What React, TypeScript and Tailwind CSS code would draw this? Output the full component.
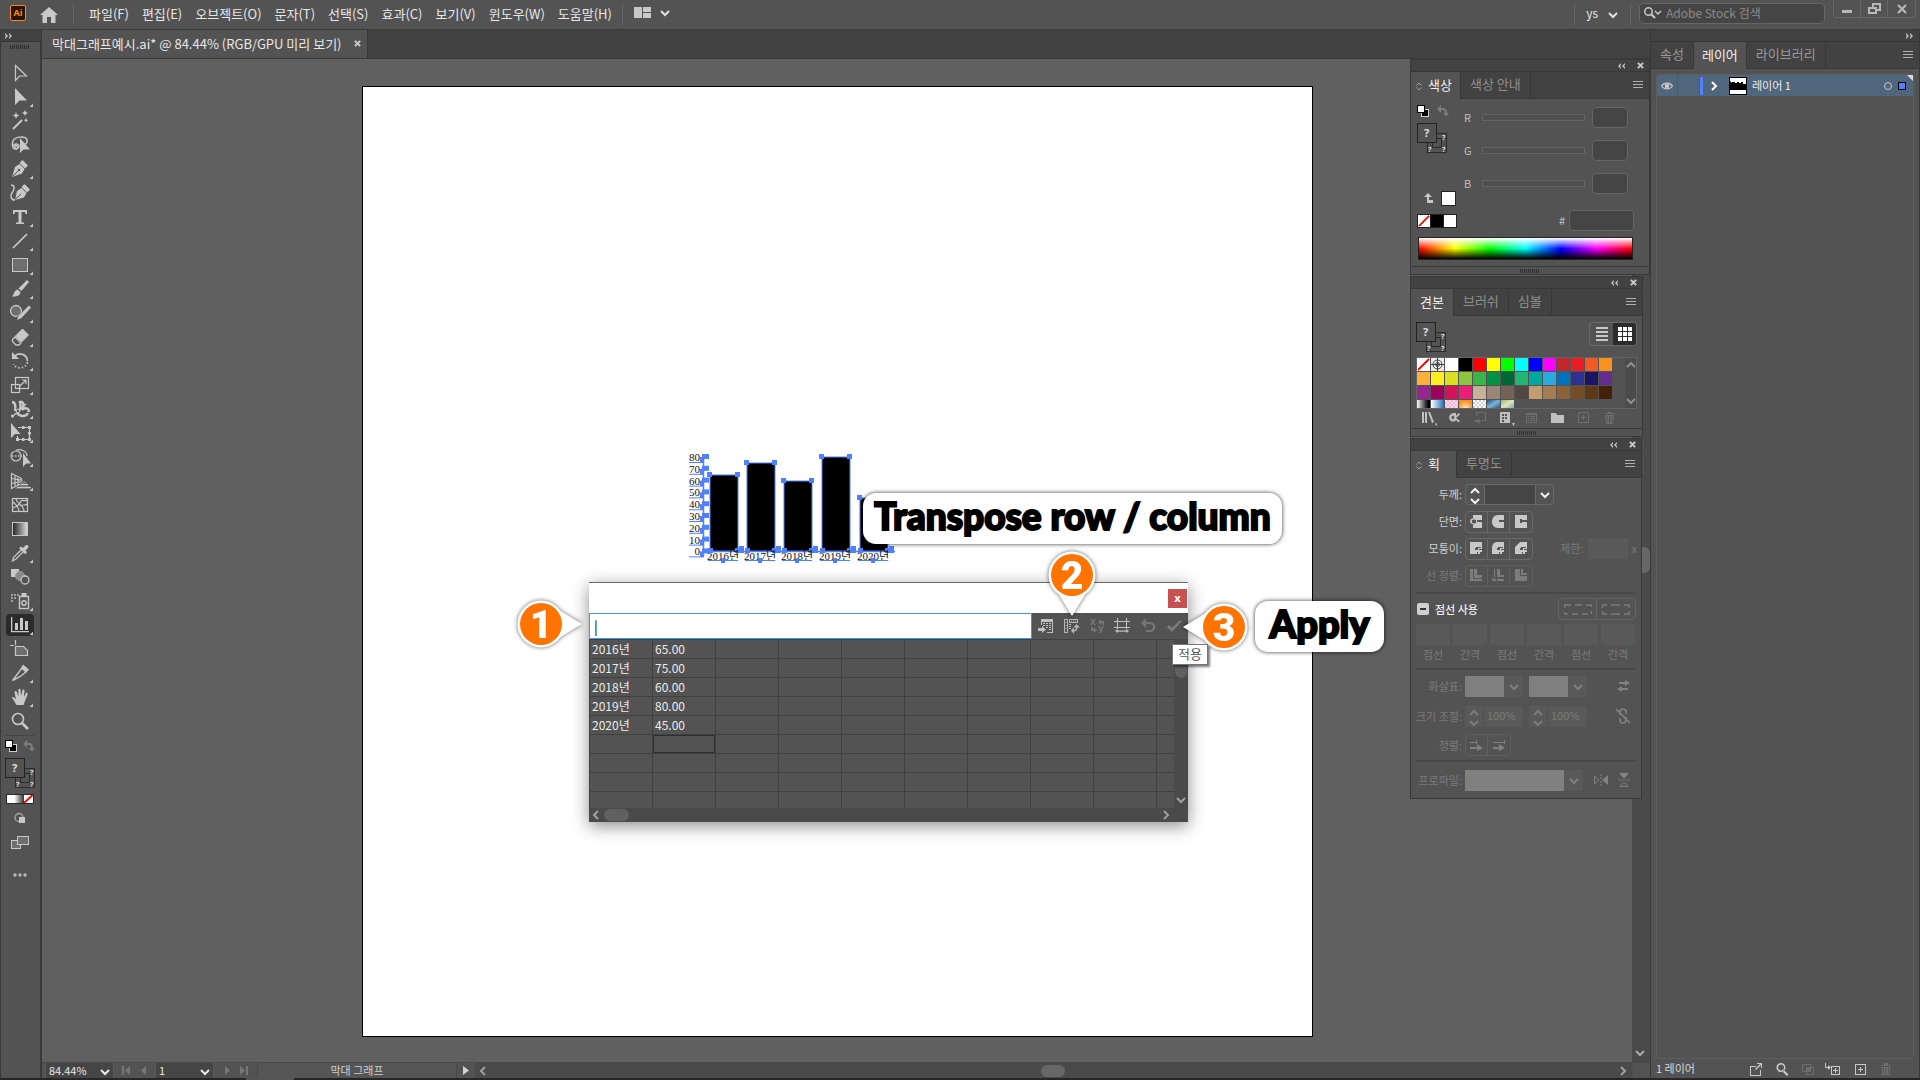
import React from "react";

const MENUS = ["파일(F)", "편집(E)", "오브젝트(O)", "문자(T)", "선택(S)", "효과(C)", "보기(V)", "윈도우(W)", "도움말(H)"];

const SWATCHES = [
  "#ffffff", "#000000", "#ff0000", "#ffff00", "#00ff00", "#00ffff", "#0000ff", "#ff00ff", "#c1272d", "#ed1c24", "#f15a24", "#f7931e",
  "#fbb03b", "#fcee21", "#d9e021", "#8cc63f", "#39b54a", "#009245", "#006837", "#22b573", "#00a99d", "#29abe2", "#0071bc", "#2e3192", "#1b1464", "#662d91",
  "#93278f", "#9e005d", "#d4145a", "#ed1e79", "#c7b299", "#998675", "#736357", "#534741", "#c69c6d", "#a67c52", "#8c6239", "#754c24", "#603813", "#42210b",
];

const DATA = [
  ["2016년", "65.00"],
  ["2017년", "75.00"],
  ["2018년", "60.00"],
  ["2019년", "80.00"],
  ["2020년", "45.00"],
];

type ChevronProps = { dir?: "down" | "up" | "left" | "right"; className?: string };

function Chevron({ dir = "down", className = "" }: ChevronProps) {
  const d = { down: "M1 3L5 7L9 3", up: "M1 7L5 3L9 7", left: "M7 1L3 5L7 9", right: "M3 1L7 5L3 9" }[dir];
  return (
    <svg viewBox="0 0 10 10" className={"h-2.5 w-2.5 shrink-0 " + className} fill="none" stroke="currentColor" strokeWidth="2">
      <path d={d} />
    </svg>
  );
}

function DoubleArrow({ left = false }: { left?: boolean }) {
  return (
    <svg viewBox="0 0 8 6" className="h-1.5 w-2" fill="#c8c8c8">
      {left ? <path d="M4 0L1 3L4 6V4.500L3 3L4 1.500ZM8 0L5 3L8 6V4.500L7 3L8 1.500Z" /> : <path d="M0 0L3 3L0 6V4.500L1 3L0 1.500ZM4 0L7 3L4 6V4.500L5 3L4 1.500Z" />}
    </svg>
  );
}

function Cross() {
  return (
    <svg viewBox="0 0 8 8" className="h-[7px] w-[7px]" stroke="#c8c8c8" strokeWidth="2.4">
      <path d="M1 1L7 7M7 1L1 7" />
    </svg>
  );
}

function MenuLines() {
  return (
    <svg viewBox="0 0 10 8" className="h-2 w-2.5" stroke="#b0b0b0" strokeWidth="1">
      <path d="M0 .5H10M0 3.500H10M0 6.500H10" />
    </svg>
  );
}

function Grip() {
  return (
    <svg viewBox="0 0 20 4" className="h-1 w-5" stroke="#2f2f2f" strokeWidth="1">
      <path d="M.5 0V4M2.500 0V4M4.500 0V4M6.500 0V4M8.500 0V4M10.500 0V4M12.500 0V4M14.500 0V4M16.500 0V4M18.500 0V4" />
    </svg>
  );
}

const L = "#c8c8c8";

const TOOLS: { name: string; more?: boolean; active?: boolean; icon: React.ReactNode }[] = [
  { name: "선택", icon: <path d="M12.500 4.500V19.500L16.500 15H23.500Z" fill="none" stroke={L} strokeWidth="1.200" /> },
  { name: "직접 선택", more: true, icon: <path d="M12 3V20L16.500 15.500H24Z" fill={L} /> },
  {
    name: "자동 선택",
    icon: (
      <g fill={L}>
        <path d="M10 20L19 11" stroke={L} strokeWidth="2" />
        <path d="M13 3L14 5.500L16.500 6.500L14 7.500L13 10L12 7.500L9.500 6.500L12 5.500ZM22 1L23 3L25 4L23 5L22 7L21 5L19 4L21 3ZM23 9L23.700 10.500L25 11.200L23.700 12L23 13.500L22.300 12L21 11.200L22.300 10.500Z" />
      </g>
    ),
  },
  {
    name: "올가미",
    icon: (
      <g>
        <path d="M14 16C10 17 8 13 10 8C12 3 23 3 24 7C24.500 9 23 11 21 12M10 13C13 9 18 12 15 15C13 17 11 15 12 13.500C13 12 15 13 14 14.500" fill="none" stroke={L} strokeWidth="1.500" />
        <path d="M17 5V20L20.500 16.500H27Z" fill={L} />
      </g>
    ),
  },
  {
    name: "펜",
    more: true,
    icon: (
      <g>
        <path d="M19.500 4L24 8.500L22 10.500L17.500 6Z" fill={L} stroke={L} strokeWidth="1.500" strokeLinejoin="round" />
        <path d="M16.500 7L21.500 12L19 16.500L9 20L12 10Z" fill={L} />
        <path d="M9.500 19.500L15.500 13.500" stroke="#535353" />
        <circle cx="16" cy="13" r="1.200" fill="#535353" />
      </g>
    ),
  },
  {
    name: "곡률",
    icon: (
      <g>
        <path d="M21.500 4L26 8.500L24 10.500L19.500 6Z" fill={L} stroke={L} strokeWidth="1.500" strokeLinejoin="round" />
        <path d="M18.500 7L23.500 12L21 16.500L12 19L14 10Z" fill={L} />
        <path d="M12 18.500L18 13" stroke="#535353" />
        <path d="M8 4C12 4 12 8 9 12C7 15 8 19 12 19" fill="none" stroke={L} strokeWidth="1.500" />
      </g>
    ),
  },
  { name: "문자", more: true, icon: <path d="M10 5H24V9H22.500L22 7H18.500V17.500H21V19H13V17.500H15.500V7H12L11.500 9H10Z" fill={L} /> },
  { name: "선분", more: true, icon: <path d="M10 19L24 5" stroke={L} strokeWidth="1.700" /> },
  { name: "사각형", more: true, icon: <rect x="9.500" y="5.500" width="15" height="13" fill="#6e6e6e" stroke={L} /> },
  {
    name: "페인트브러시",
    more: true,
    icon: (
      <g fill={L}>
        <path d="M24 3L26 5L18.500 14L15.500 11.500Z" />
        <path d="M14.500 12.500L17.500 15C17 19 13 20 9 19.500C11 18 11 13.500 14.500 12.500Z" />
      </g>
    ),
  },
  {
    name: "물방울 브러쉬",
    more: true,
    icon: (
      <g>
        <circle cx="13" cy="10" r="5.500" fill="#6e6e6e" stroke={L} strokeWidth="1.300" />
        <path d="M27 5L18 16L14 19" stroke="#535353" strokeWidth="5" fill="none" />
        <path d="M26 4.500L28 6.500L18.500 17L14 19L15.500 15Z" fill={L} />
      </g>
    ),
  },
  {
    name: "지우개",
    more: true,
    icon: (
      <g>
        <path d="M19.500 4L25.500 10L18.500 17L12.500 11Z" fill={L} stroke={L} strokeWidth="1" strokeLinejoin="round" />
        <path d="M12 12L18 18L16 20H13L9.500 16.500V14.500Z" fill="none" stroke={L} strokeWidth="1.300" />
      </g>
    ),
  },
  {
    name: "회전",
    more: true,
    icon: (
      <g fill="none" stroke={L} strokeWidth="1.700">
        <path d="M12 7C16 3 24 5 24.500 12" />
        <path d="M24.500 13C23 20 13 21 10.500 15" strokeDasharray="1.500 2" />
        <path d="M9 3V10H16Z" fill={L} stroke="none" />
      </g>
    ),
  },
  {
    name: "크기 조절",
    more: true,
    icon: (
      <g fill="none" stroke={L} strokeWidth="1.200">
        <rect x="12.500" y="4.500" width="13" height="11" />
        <rect x="8.500" y="11.500" width="8" height="8" />
        <path d="M17 13L22.500 7.500M19 7H23V11" />
      </g>
    ),
  },
  {
    name: "폭",
    more: true,
    icon: (
      <g fill="none" stroke={L}>
        <path d="M9 5C12 5 13 9 12 14M14 13C18 15 18 9 17 5C20 4 22 8 19 12M19 13C22 10 26 11 26 15M14 16C17 20 23 20 25 16" strokeWidth="2.400" />
        <path d="M9 20L23 7" strokeWidth="1.200" />
        <circle cx="15" cy="14" r="1.800" fill="#535353" />
        <circle cx="9.500" cy="19" r="1.500" fill={L} stroke="none" />
      </g>
    ),
  },
  {
    name: "자유 변형",
    more: true,
    icon: (
      <g>
        <path d="M15 6.500H26.500V18.500H14.500V15" fill="none" stroke={L} strokeWidth="1.200" />
        <path d="M25 5H28V8H25ZM25 17H28V20H25ZM13 17H16V20H13ZM19 5H21.500V8H19ZM19 17H21.500V20H19ZM25 11H28V13.500H25Z" fill={L} />
        <path d="M8 2V17L12 13H17.500Z" fill={L} />
      </g>
    ),
  },
  {
    name: "도형 구성",
    more: true,
    icon: (
      <g>
        <circle cx="13" cy="11" r="5" fill="none" stroke={L} strokeWidth="1.200" />
        <path d="M13 5.500C17 3 24 6 24 11" fill="none" stroke={L} strokeWidth="1.200" />
        <path d="M9 11H19" stroke={L} strokeDasharray="1.500 1.500" strokeWidth="1.300" />
        <path d="M20 8V22L23 18.500H28Z" fill={L} />
      </g>
    ),
  },
  {
    name: "원근감 격자",
    more: true,
    icon: (
      <g>
        <path d="M8.500 4.500V19.500L18.500 14.500V9.500ZM8.500 9.500L18.500 11M8.500 14.500L18.500 12.500M12 6V18M15 7.500V16" fill="none" stroke={L} strokeWidth="1.200" />
        <path d="M18 12H22L28 20H12L18 15Z" fill="#7a7a7a" />
        <path d="M18 15.500H25M14 18.500H28" stroke={L} />
      </g>
    ),
  },
  {
    name: "망",
    icon: (
      <g fill="none" stroke={L} strokeWidth="1.200">
        <rect x="9.500" y="5.500" width="15" height="13" />
        <path d="M10 9C13 12 15 12 16 18M13 6C13 10 20 11 21 18M10 15C13 13 16 14 18 8C19 6 22 9 24 7M17 13C20 11 22 13 24 11" />
      </g>
    ),
  },
  { name: "그라디언트", icon: <rect x="9.500" y="5.500" width="15" height="13" fill="url(#toolGradient)" stroke={L} /> },
  {
    name: "스포이드",
    more: true,
    icon: (
      <g>
        <path d="M18.500 8.500L20.500 10.500L13 18L9.500 20L10.500 16.500Z" fill="none" stroke={L} strokeWidth="1.300" />
        <path d="M16 7L18 5.500L20 7L22.500 4.500C24.500 3 26.500 5.500 25 7L22.500 9.500L24 11.500L22 13Z" fill={L} />
      </g>
    ),
  },
  {
    name: "블렌드",
    icon: (
      <g>
        <rect x="8" y="4" width="8" height="8" fill={L} />
        <circle cx="17" cy="11" r="4.500" fill="#8a8a8a" stroke="#9c9c9c" />
        <circle cx="22" cy="15" r="4" fill="#535353" stroke={L} strokeWidth="1.300" />
      </g>
    ),
  },
  {
    name: "심볼 분무기",
    more: true,
    icon: (
      <g>
        <rect x="16.500" y="7.500" width="9" height="12" fill="none" stroke={L} strokeWidth="1.400" />
        <rect x="18.500" y="4" width="5" height="3" fill={L} />
        <circle cx="21" cy="14" r="2.200" fill="none" stroke={L} strokeWidth="1.400" />
        <path d="M8 5H10V7H8ZM11 5H13V7H11ZM14 5H16V7H14ZM8 8H10V10H8ZM11 8H13V10H11ZM8 11H10V13H8Z" fill="#a0a0a0" />
      </g>
    ),
  },
  { name: "막대 그래프", more: true, active: true, icon: <path d="M8 4H9.300V18H26V19.300H8ZM12 10H15V17H12ZM17 5H20V17H17ZM22 8H25V17H22Z" fill={L} /> },
  {
    name: "대지",
    icon: (
      <g fill="none" stroke={L} strokeWidth="1.200">
        <path d="M12.500 9.500H20.500L24.500 13.500V18.500H12.500Z" fill="#6e6e6e" />
        <path d="M12.500 3V8M7 8.500H11" />
      </g>
    ),
  },
  {
    name: "분할 영역",
    more: true,
    icon: (
      <g>
        <path d="M19 7L23 11L16.500 16L9.500 19.500Z" fill="none" stroke={L} strokeWidth="1.400" />
        <path d="M20 3.500L26 8.500L23.500 11.500L18 7Z" fill={L} />
      </g>
    ),
  },
  {
    name: "손",
    more: true,
    icon: (
      <path d="M13.500 20C12 17 10 15 9 12.500C9.500 11.500 11 12 13 14.500L11.500 7C12 5.500 13.500 6 14 7.500L15.500 11.500L15.300 4.500C15.800 3.500 17.200 3.500 17.500 4.500L18 11L19.500 5C20 4 21.500 4.500 21.500 5.500L20.800 12L23 8C24 7 25 8 24.500 9.500L22 16L20.500 20Z" fill={L} />
    ),
  },
  {
    name: "돋보기",
    icon: (
      <g fill="none" stroke={L}>
        <circle cx="15" cy="10" r="5.500" strokeWidth="1.600" />
        <path d="M19 14L25 20" strokeWidth="2.600" />
      </g>
    ),
  },
];

function FillStroke() {
  return (
    <svg viewBox="0 0 31 31" className="block h-[31px] w-[31px]" fontFamily="Noto Sans, sans-serif" fontWeight="700" fill="#e0e0e0">
      <rect x="10.500" y="10.500" width="19" height="19" fill="#535353" stroke="#2a2a2a" />
      <rect x="15.500" y="15.500" width="9" height="9" fill="#535353" stroke="#2a2a2a" />
      <text x="25" y="17" fontSize="7">?</text>
      <text x="25" y="29" fontSize="7">?</text>
      <text x="11" y="29" fontSize="7">?</text>
      <rect x=".5" y=".5" width="19" height="19" fill="#535353" stroke="#222222" />
      <text x="7" y="14" fontSize="11">?</text>
    </svg>
  );
}

function DefaultColors() {
  return (
    <svg viewBox="0 0 12 12" className="h-3 w-3">
      <rect x="4" y="4" width="8" height="8" fill="#d0d0d0" />
      <rect x="5" y="5" width="6" height="6" fill="#000" />
      <rect x="0" y="0" width="8" height="8" fill="#d0d0d0" />
      <rect x=".5" y=".5" width="7" height="7" fill="#fff" stroke="#000" />
    </svg>
  );
}

function SwapArrow() {
  return (
    <svg viewBox="0 0 12 12" className="h-3 w-3" fill="#7d7d7d">
      <path d="M0 4L4 0V3H6C9 3 10 5 10 8H12L9 11.500L6 8H8C8 6 7.500 5 6 5H4V8Z" />
    </svg>
  );
}

function Toolbar() {
  return (
    <aside className="flex w-[42px] shrink-0 flex-col border-x border-[#3a3a3a] bg-[#535353]">
      <svg className="absolute h-0 w-0">
        <defs>
          <linearGradient id="toolGradient">
            <stop offset="0" stopColor="#222" />
            <stop offset="1" stopColor="#ddd" />
          </linearGradient>
        </defs>
      </svg>
      <div className="flex h-3 shrink-0 items-center border-b border-[#353535] bg-[#424242] pl-1">
        <DoubleArrow />
      </div>
      <div className="flex w-full flex-1 flex-col items-center border-r border-[#3a3a3a] pr-0.5">
        <div className="pt-[3px] pb-3">
          <Grip />
        </div>
        {TOOLS.map((t) => (
          <button key={t.name} aria-label={t.name} className={"block h-6 w-[34px] " + (t.active ? "px-[3px]" : "")}>
            <span className={"flex justify-center overflow-visible " + (t.active ? "h-[22px] items-center rounded-sm bg-[#2b2b2b]" : "h-6")}>
              <svg viewBox="0 0 34 24" className="h-6 w-[34px] shrink-0">
                {t.icon}
                {t.more && <path d="M30 18.500V22H26.500Z" fill={L} />}
              </svg>
            </span>
          </button>
        ))}
        <div className="mt-[2px] h-px w-[30px] bg-[#454545]" />
        <div className="mt-1 flex w-[30px] items-center justify-between">
          <DefaultColors />
          <SwapArrow />
        </div>
        <div className="mt-[6px] w-[30px]">
          <FillStroke />
        </div>
        <div className="mt-[5px] grid h-[10px] w-7 grid-cols-3 border border-[#2a2a2a] bg-[#2a2a2a]">
          <div className="bg-white" />
          <div className="bg-linear-to-r from-[#eee] to-[#333]" />
          <svg viewBox="0 0 9 8" className="h-2 w-full bg-white" preserveAspectRatio="none">
            <path d="M0 8L9 0" stroke="red" strokeWidth="2" />
          </svg>
        </div>
        <button aria-label="그리기 모드" className="mt-2">
          <svg viewBox="0 0 34 14" className="block h-3.5 w-[34px]">
            <circle cx="16" cy="5.500" r="4" fill="none" stroke="#a8a8a8" strokeWidth="1.300" />
            <rect x="16" y="5" width="6" height="6" fill={L} />
          </svg>
        </button>
        <button aria-label="화면 모드" className="mt-2.5">
          <svg viewBox="0 0 34 14" className="block h-3.5 w-[34px]" fill="#6e6e6e" stroke={L}>
            <rect x="8.500" y="4.500" width="9" height="8" />
            <rect x="14.500" y=".5" width="11" height="8" />
          </svg>
        </button>
        <button aria-label="도구 모음 편집" className="mt-5">
          <svg viewBox="0 0 14 10" className="block h-2.5 w-3.5" fill="#b8b8b8">
            <circle cx="2" cy="5" r="1.700" />
            <circle cx="7" cy="5" r="1.700" />
            <circle cx="12" cy="5" r="1.700" />
          </svg>
        </button>
      </div>
    </aside>
  );
}

function TopBar() {
  return (
    <header className="flex h-[30px] shrink-0 items-center border-b border-[#3a3a3a] bg-[#535353] pl-2.5 text-[13px] leading-none text-[#e8e8e8]">
      <div className="mb-1 flex h-4 w-4 items-center justify-center rounded-xs border border-[#ff8a1a] bg-[#2a1400] font-['Open_Sans'] text-[9px] font-bold text-[#ff8a1a]">Ai</div>
      <button aria-label="홈" className="ml-3.5">
        <svg viewBox="0 0 18 16" className="h-4 w-[18px]" fill="#c8c8c8">
          <path d="M9 0L18 8H15.500V16H11V10H7V16H2.500V8H0Z" />
        </svg>
      </button>
      <div className="mx-[15px] h-5 w-px bg-[#666666]" />
      <nav className="flex gap-[13px] pb-0.5 whitespace-nowrap">
        {MENUS.map((m) => (
          <button key={m}>{m}</button>
        ))}
      </nav>
      <div className="ml-2.5 mr-[11px] h-5 w-px bg-[#666666]" />
      <button aria-label="작업 영역 정돈" className="flex items-center gap-2 pb-1">
        <svg viewBox="0 0 18 12" className="h-3 w-[18px]" fill="#c8c8c8">
          <path d="M0 0H8V11H0ZM9 0H17V5H9ZM9 6H17V11H9Z" />
        </svg>
        <Chevron className="text-[#e0e0e0]" />
      </button>
      <div className="ml-auto mr-[11px] h-5 w-px bg-[#666666]" />
      <button className="flex items-center gap-2.5 pb-1 text-xs">
        ys <Chevron className="mt-1 h-2 w-2 text-[#e0e0e0]" />
      </button>
      <div className="ml-3 mr-2 h-5 w-px bg-[#666666]" />
      <label className="mb-0.5 flex h-[21px] w-[186px] items-center gap-1 rounded border border-[#666666] bg-[#454545] px-1 pb-0.5">
        <svg viewBox="0 0 18 12" className="h-3 w-[18px] shrink-0" fill="none" stroke="#c8c8c8">
          <circle cx="4.500" cy="4.500" r="3.700" strokeWidth="1.500" />
          <path d="M7 7L11 11" strokeWidth="2.200" />
          <path d="M11 4L14 7L17 4" strokeWidth="1.500" />
        </svg>
        <input aria-label="Adobe Stock 검색" placeholder="Adobe Stock 검색" className="w-full bg-transparent text-xs outline-none placeholder:text-[#8a8a8a]" />
      </label>
      <div className="mr-1 ml-2 flex self-start rounded-b border border-t-0 border-[#666666]">
        <button aria-label="최소화" className="flex h-[17px] w-[27px] items-end justify-center border-r border-[#666666] pb-1">
          <span className="h-[3px] w-2.5 bg-[#b8b8b8]" />
        </button>
        <button aria-label="복원" className="flex h-[17px] w-[27px] items-center justify-center border-r border-[#666666]">
          <svg viewBox="0 0 13 11" className="h-[11px] w-[13px]" fill="none" stroke="#b8b8b8" strokeWidth="2">
            <path d="M5 4V1H12V7H8M1 5H8V10H1Z" />
          </svg>
        </button>
        <button aria-label="닫기" className="flex h-[17px] w-[27px] items-center justify-center">
          <svg viewBox="0 0 10 10" className="h-2.5 w-2.5" stroke="#b8b8b8" strokeWidth="2.200">
            <path d="M1 1L9 9M9 1L1 9" />
          </svg>
        </button>
      </div>
    </header>
  );
}

type TabsProps = { tabs: string[]; stepper?: boolean; firstPad: string; pad: string };

function PanelTabs({ tabs, stepper, firstPad, pad }: TabsProps) {
  return (
    <div role="tablist" className="flex h-[27px] border-b border-[#383838] bg-[#424242] text-[13px] leading-none text-[#8f8f8f]">
      {tabs.map((t, i) => (
        <button
          key={t}
          role="tab"
          aria-selected={i === 0}
          className={"-mb-px flex items-center gap-1.5 border-r border-[#383838] pb-[3px] " + (i === 0 ? "bg-[#535353] text-[#efefef] " + firstPad : "border-b " + pad)}
        >
          {stepper && i === 0 && (
            <svg viewBox="0 0 6 9" className="mt-1 h-[9px] w-1.5" fill="none" stroke="#a0a0a0">
              <path d="M.5 3.500L3 1L5.500 3.500M.5 5.500L3 8L5.500 5.500" />
            </svg>
          )}
          {t}
        </button>
      ))}
      <button aria-label="패널 메뉴" className="ml-auto pr-1.5">
        <MenuLines />
      </button>
    </div>
  );
}

function PanelHeader() {
  return (
    <div className="flex h-3 items-center justify-end gap-3 border-b border-[#383838] bg-[#424242] pr-[5px]">
      <button aria-label="축소">
        <DoubleArrow left />
      </button>
      <button aria-label="패널 닫기">
        <Cross />
      </button>
    </div>
  );
}

function PanelGrip() {
  return (
    <div className="flex h-2 items-center justify-center border-t border-[#383838]">
      <Grip />
    </div>
  );
}

function None({ className }: { className: string }) {
  return (
    <svg viewBox="0 0 13 13" className={className}>
      <rect width="13" height="13" fill="#fff" />
      <path d="M1 12L12 1" stroke="red" strokeWidth="1.800" />
    </svg>
  );
}

function ColorPanel() {
  return (
    <section className="w-60 border border-[#383838] bg-[#535353]">
      <PanelHeader />
      <PanelTabs tabs={["색상", "색상 안내"]} stepper firstPad="pr-2 pl-[5px]" pad="px-[9px]" />
      <div className="flex h-[167px] flex-col px-1.5 pt-1.5">
        <div className="flex">
          <div className="w-[47px]">
            <div className="flex w-8 justify-between">
              <DefaultColors />
              <SwapArrow />
            </div>
            <div className="mt-1.5">
              <FillStroke />
            </div>
            <div className="mt-9 flex h-4 items-center gap-2 pl-[7px]">
              <svg viewBox="0 0 9 10" className="h-2.5 w-[9px]" fill="#c8c8c8">
                <path d="M4 0L8 4H5V7H9V10H3V4H0Z" />
              </svg>
              <div className="h-[15px] w-[15px] border border-[#222222] bg-white" />
            </div>
          </div>
          <div className="flex-1 pt-0.5 text-[11px] leading-none text-[#c0c0c0]">
            {["R", "G", "B"].map((c) => (
              <label key={c} className="mb-3 flex h-[21px] items-center">
                <span className="w-[18px]">{c}</span>
                <input type="range" aria-label={c + " 슬라이더"} className="h-[7px] w-[103px] appearance-none border border-[#646464] bg-[#4f4f4f] [&::-webkit-slider-thumb]:w-0 [&::-webkit-slider-thumb]:appearance-none" />
                <input aria-label={c + " 값"} className="ml-[7px] h-[21px] w-9 rounded-sm border border-[#666666] bg-[#454545]" />
              </label>
            ))}
          </div>
        </div>
        <div className="mt-1 flex items-center">
          <div className="flex gap-px border border-[#222222] bg-[#222222]">
            <None className="h-3 w-3" />
            <div className="h-3 w-3 bg-black" />
            <div className="h-3 w-3 bg-white" />
          </div>
          <label className="mr-[9px] ml-auto flex items-center gap-1 text-[11px] leading-none text-[#c0c0c0]">
            #
            <input className="h-[21px] w-[65px] rounded-sm border border-[#666666] bg-[#454545]" />
          </label>
        </div>
        <div className="mt-1.5 ml-px h-[23px] w-[215px] border border-[#222222] bg-[linear-gradient(to_bottom,#fff,#fff0_50%,#0000_50%,#000),linear-gradient(to_right,red,#ff0,lime,cyan,blue,magenta,red)]" />
      </div>
      <PanelGrip />
    </section>
  );
}

const SWATCH_ACTIONS = [
  { name: "견본 라이브러리", on: true, d: "M2 3H4V14H2ZM5 3H7V14H5ZM8 3H10L14 13L12 14ZM14.500 14.500H17V17Z" },
  { name: "색상 테마", on: true, d: "M8 4C4 4 2 8 4 11C5 13 9 13 10 11L12.500 13.500L14 12L10 9L14 5.500L12.500 4L10 7V4ZM7.500 6.500L8.500 8.500L7 10.500C5 10 5 7 7.500 6.500Z" },
  { name: "추가", d: "M4 3H14V12H10V11H13V4H5V7H4ZM2 11H6V9L9 12L6 15V13H2Z" },
  { name: "견본 종류", on: true, d: "M2 3H12V14H2ZM4 5V7H6V5ZM7 5V7H9V5ZM4 8V10H6V8ZM7 8V10H9V8ZM4 11V13H6V11ZM14 14H17L15.500 17Z" },
  { name: "견본 옵션", d: "M3 4H14V14H3ZM4 6V13H13V6ZM5 7H6V8H5ZM7 7H12V8H7ZM5 9H6V10H5ZM7 9H12V10H7ZM5 11H6V12H5ZM7 11H12V12H7Z" },
  { name: "새 색상 그룹", on: true, d: "M2 4H7L8 6H15V14H2Z" },
  { name: "새 견본", d: "M3 3H14V14H3ZM4 4V13H13V4ZM8 6H9V8H11V9H9V11H8V9H6V8H8Z" },
  { name: "견본 삭제", d: "M3 4H7V3H10V4H14V5H3ZM4 6H13L12 15H5ZM5.500 7V14H6.500V7ZM8 7V14H9V7ZM10.500 7V14H11.500V7Z" },
];

function SwatchesPanel() {
  return (
    <section className="w-[233px] border border-[#383838] bg-[#535353]">
      <PanelHeader />
      <PanelTabs tabs={["견본", "브러쉬", "심볼"]} firstPad="px-[9px]" pad="px-[9px]" />
      <div className="flex h-[112px] flex-col px-[5px] pt-1.5">
        <div className="flex justify-between">
          <FillStroke />
          <div className="flex h-6 w-12 overflow-hidden rounded-sm border border-[#6a6a6a]">
            <button aria-label="목록 보기" className="flex flex-1 items-center justify-center">
              <svg viewBox="0 0 12 14" className="h-3.5 w-3" fill="#c8c8c8">
                <path d="M0 0H12V2H0ZM0 4H12V6H0ZM0 8H12V10H0ZM0 12H12V14H0Z" />
              </svg>
            </button>
            <button aria-label="축소판 보기" className="flex flex-1 items-center justify-center bg-[#2b2b2b]">
              <svg viewBox="0 0 14 14" className="h-3.5 w-3.5" fill="#fff">
                <path d="M0 0H4V4H0ZM5 0H9V4H5ZM10 0H14V4H10ZM0 5H4V9H0ZM5 5H9V9H5ZM10 5H14V9H10ZM0 10H4V14H0ZM5 10H9V14H5ZM10 10H14V14H10Z" />
              </svg>
            </button>
          </div>
        </div>
        <div className="mt-1 flex h-[52px] border border-[#646464] bg-[#4b4b4b]">
          <div className="grid w-[208px] grid-cols-[repeat(14,13px)] grid-rows-[13px_13px_13px_8px] gap-px overflow-hidden bg-[#535353]">
            <None className="h-[13px] w-[13px]" />
            <svg viewBox="0 0 13 13" className="h-[13px] w-[13px] bg-[#ececec]" fill="none" stroke="#444">
              <circle cx="6.500" cy="6.500" r="4.500" />
              <circle cx="6.500" cy="6.500" r="2" />
              <path d="M6.500 0V13M0 6.500H13" />
            </svg>
            {SWATCHES.map((c) => (
              <div key={c} style={{ backgroundColor: c }} />
            ))}
            <div className="bg-linear-to-r from-white to-black" />
            <div className="bg-linear-to-r from-white to-[#0071bc]" />
            <div className="bg-[repeating-conic-gradient(#f3b6d2_0_25%,#fbdbe9_0_50%)] bg-size-[4px_4px]" />
            <div className="bg-[radial-gradient(circle_at_50%_100%,#ffe9c8,#f7931e_70%)]" />
            <div className="bg-[repeating-conic-gradient(#ccc_0_25%,#fff_0_50%)] bg-size-[4px_4px]" />
            <div className="bg-linear-to-br from-[#1d4f83] via-[#7fb2d8] to-[#1f5f94]" />
            <div className="bg-linear-to-br from-[#7dbd8c] via-[#e9e4b0] to-[#6fb0c4]" />
          </div>
          <div className="flex flex-1 flex-col items-center justify-between bg-[#4b4b4b] py-0.5 text-[#909090]">
            <Chevron dir="up" className="h-2 w-2" />
            <Chevron className="h-2 w-2" />
          </div>
        </div>
        <div className="flex w-[203px] justify-between pl-1">
          {SWATCH_ACTIONS.map((a) => (
            <button key={a.name} aria-label={a.name}>
              <svg viewBox="0 0 18 18" className="h-[18px] w-[18px]" fill={a.on ? "#c0c0c0" : "#6e6e6e"} fillRule="evenodd">
                <path d={a.d} />
              </svg>
            </button>
          ))}
        </div>
      </div>
      <PanelGrip />
    </section>
  );
}

function Row({ label, dim, height = "h-[27px]", children }: { label: string; dim?: boolean; height?: string; children: React.ReactNode }) {
  return (
    <div className={"flex items-center " + height}>
      <span className={"mr-[3px] w-[49px] shrink-0 text-right whitespace-nowrap " + (dim ? "text-[#7a7a7a]" : "text-[#d0d0d0]")}>{label}</span>
      {children}
    </div>
  );
}

function IconGroup({ label, icons, color, dim }: { label: string; icons: string[]; color: string; dim?: boolean }) {
  return (
    <div role="group" aria-label={label} className={"flex h-[22px] divide-x rounded-sm border " + (dim ? "divide-[#606060] border-[#606060]" : "divide-[#696969] border-[#696969]")}>
      {icons.map((d, i) => (
        <button key={i} aria-label={label + (i + 1)} className="flex w-[22px] items-center justify-center">
          <svg viewBox="0 0 13 13" className="h-[13px] w-[13px]" fill={color} fillRule="evenodd">
            <path d={d} />
          </svg>
        </button>
      ))}
    </div>
  );
}

function DimSelect({ label, width }: { label: string; width: string }) {
  return (
    <label className={"relative mr-1.5 flex h-[21px] bg-[#595959] " + width}>
      <select aria-label={label} className="mr-[19px] w-full appearance-none bg-[#808080]" disabled />
      <Chevron className="absolute top-1.5 right-1 h-2.5 w-2.5 text-[#808080]" />
    </label>
  );
}

function ScaleBox({ label }: { label: string }) {
  return (
    <label className="mr-1.5 flex h-[21px] w-[58px] items-center bg-[#595959] text-[#7c7c7c]">
      <span className="flex h-full w-[19px] flex-col items-center justify-between border-r border-[#505050] py-0.5">
        <Chevron dir="up" className="h-2 w-2" />
        <Chevron className="h-2 w-2" />
      </span>
      <input aria-label={label} defaultValue="100%" disabled className="w-9 bg-transparent pb-0.5 pl-[3px] text-[11px]" />
    </label>
  );
}

function Rule() {
  return <div className="mr-[5px] ml-[3px] h-0.5 bg-[#494949]" />;
}

const CAP_ICONS = [
  "M3 0H12V5H7V7H12V13H3V9L6 8V5L3 4ZM0 6C0 4 2 3 4 4V5C1 4 1 9 4 8V9C2 10 0 8 0 6Z",
  "M6 0H12V5H7V7H12V13H6C-2 13-2 0 6 0Z",
  "M0 0H12V5H7V4H5V8H7V7H12V13H0Z",
];
const JOIN_ICONS = [
  "M0 0H12V7H9V10H7V12H0ZM6 5H11V6H8V8H5V6H6ZM9 8H12V10H10V12H8V10H9Z",
  "M6 0H12V7H9V10H7V12H0V6C0 2 2 0 6 0ZM6 5H11V6H8V8H5V6H6ZM9 8H12V10H10V12H8V10H9Z",
  "M5 0H12V7H9V10H7V12H0V5ZM6 5H11V6H8V8H5V6H6ZM9 8H12V10H10V12H8V10H9Z",
];
const ALIGN_ICONS = ["M0 0H3V12H0ZM4 0H7V6H12V9H4ZM3 10H12V12H3Z", "M2 0H3V9H1V10H12V12H5V10H4V12H1L0 11V9H2ZM5 0H8V6H12V8H5Z", "M0 0H5V7H12V12H0ZM6 0H8V4H12V6H6Z"];

function StrokePanel() {
  return (
    <section className="w-[232px] border border-[#383838] bg-[#535353] text-[11px] leading-none">
      <PanelHeader />
      <PanelTabs tabs={["획", "투명도"]} stepper firstPad="pr-4 pl-[5px]" pad="px-[9px]" />
      <div className="pt-[3px] pl-0.5">
        <Row label="두께:">
          <div className="flex h-[21px] rounded-sm border border-[#696969] text-[#efefef]">
            <button aria-label="두께 조정" className="flex w-[18px] flex-col items-center justify-between py-px">
              <Chevron dir="up" className="h-2 w-2" />
              <Chevron className="h-2 w-2" />
            </button>
            <input aria-label="두께" className="w-[52px] border-x border-[#696969] bg-[#454545]" />
            <button aria-label="두께 목록" className="flex w-[17px] items-center justify-center">
              <Chevron className="h-2 w-2" />
            </button>
          </div>
        </Row>
        <Row label="단면:">
          <IconGroup label="단면" color="#c8c8c8" icons={CAP_ICONS} />
        </Row>
        <Row label="모퉁이:">
          <IconGroup label="모퉁이" color="#c8c8c8" icons={JOIN_ICONS} />
          <label className="ml-auto flex items-center gap-1 text-[#7a7a7a]">
            제한:
            <input disabled className="h-[21px] w-10 bg-[#595959]" />
          </label>
          <span className="mr-1 ml-1 text-[#7a7a7a]">x</span>
        </Row>
        <Row label="선 정렬:" dim>
          <IconGroup dim label="선 정렬" color="#7c7c7c" icons={ALIGN_ICONS} />
        </Row>
        <div className="pt-[3px]">
          <Rule />
        </div>
        <div className="flex h-[30px] items-center pr-[5px] pl-1">
          <label className="flex items-center gap-1.5 font-medium text-[#efefef]">
            <span className="relative flex">
              <input type="checkbox" className="h-3 w-3 appearance-none rounded-xs bg-[#d0d0d0]" />
              <span className="absolute top-[5px] left-[3px] h-0.5 w-1.5 bg-[#333333]" />
            </span>
            점선 사용
          </label>
          <div className="ml-auto flex h-[22px] divide-x divide-[#646464] rounded-sm border border-[#646464]">
            {["M.5 4V1H7M11 1H18M22 1H27.500V3M27.500 7V10M24 10H18M14 10H8M4 10H.5V8", "M.5 4V1H5M9 1H18M22 1H27.500V4M27.500 7V10H22M18 10H9M5 10H.5V7"].map((d, i) => (
              <button key={d} aria-label={"점선 맞춤 " + (i + 1)} className="flex w-[38px] items-center justify-center">
                <svg viewBox="0 0 28 11" className="h-[11px] w-7" fill="none" stroke="#7c7c7c" strokeWidth="1.500">
                  <path d={d} />
                </svg>
              </button>
            ))}
          </div>
        </div>
        <div className="flex gap-[3px] pr-1.5 pl-[3px] text-[#7a7a7a]">
          {["점선", "간격", "점선", "간격", "점선", "간격"].map((t, i) => (
            <label key={i} className="flex flex-1 flex-col items-center gap-1">
              <input aria-label={t + (i + 1)} disabled className="h-[21px] w-full bg-[#595959]" />
              {t}
            </label>
          ))}
        </div>
        <div className="pt-2">
          <Rule />
        </div>
        <Row label="화살표:" dim height="h-8">
          <DimSelect label="시작 화살표" width="w-[58px]" />
          <DimSelect label="끝 화살표" width="w-[58px]" />
          <button aria-label="화살표 바꾸기" className="mr-[11px] ml-auto">
            <svg viewBox="0 0 13 12" className="h-3 w-[13px]" fill="#828282">
              <path d="M2 2H8V0L13 3L8 6V4H2ZM11 8H5V6L0 9L5 12V10H11Z" />
            </svg>
          </button>
        </Row>
        <Row label="크기 조절:" dim height="h-7">
          <ScaleBox label="시작 크기" />
          <ScaleBox label="끝 크기" />
          <button aria-label="크기 연결" className="mr-[11px] ml-auto">
            <svg viewBox="0 0 14 16" className="h-4 w-3.5" fill="none" stroke="#828282" strokeWidth="1.600">
              <path d="M4 7V4C4 0 10 0 10 4V6M10 9V12C10 16 4 16 4 12V10M0 1L14 15" />
            </svg>
          </button>
        </Row>
        <Row label="정렬:" dim height="h-[30px]">
          <IconGroup dim label="정렬" color="#808080" icons={["M0 3H6V1H7V5H6V4H0ZM0 8H7V5L13 9L7 12V10H0Z", "M0 3H11V1H12V5H11V4H0ZM0 8H6V5L12 9L6 12V10H0Z"]} />
        </Row>
        <Rule />
        <Row label="프로파일:" dim height="h-[36px]">
          <DimSelect label="프로파일" width="w-[118px]" />
          <div className="mr-[11px] ml-auto flex gap-2.5">
            <button aria-label="가로로 뒤집기">
              <svg viewBox="0 0 14 12" className="h-3 w-3.5" fill="#828282">
                <path d="M14 1V11L8 6ZM6.500 0H7.500V2H6.500ZM6.500 3H7.500V5H6.500ZM6.500 7H7.500V9H6.500ZM6.500 10H7.500V12H6.500Z" />
                <path d="M.5 2V10L5 6Z" fill="none" stroke="#828282" />
              </svg>
            </button>
            <button aria-label="세로로 뒤집기">
              <svg viewBox="0 0 12 14" className="h-3.5 w-3" fill="#828282">
                <path d="M1 0H11L6 5.500ZM0 6.500H2V7.500H0ZM3 6.500H5V7.500H3ZM7 6.500H9V7.500H7ZM10 6.500H12V7.500H10Z" />
                <path d="M2 13.500H10L6 9Z" fill="none" stroke="#828282" />
              </svg>
            </button>
          </div>
        </Row>
      </div>
    </section>
  );
}

const BARS = [
  { x: 25, top: 25 },
  { x: 62, top: 13 },
  { x: 99, top: 31 },
  { x: 137, top: 7 },
  { x: 175, top: 48 },
];

function BarGraph() {
  const B = "#4f80ff";
  return (
    <svg viewBox="0 0 220 120" className="absolute top-[363px] left-[322px] h-[120px] w-[220px]">
      <g fontFamily="Liberation Serif, Noto Sans CJK KR, serif" fontSize="11" fill="#111">
        {[80, 70, 60, 50, 40, 30, 20, 10, 0].map((v, i) => (
          <g key={v}>
            <text x="15" y={11 + i * 11.8} textAnchor="end">{v}</text>
            <path d={`M4 ${12.5 + i * 11.8}H15`} stroke={B} />
            <rect x="15" y={7 + i * 11.8} width="4" height="6" fill={B} />
            <rect x="17" y={4 + i * 11.8} width="7" height="5" fill={B} />
          </g>
        ))}
        <path d="M18.500 7V106M20 101.500H210" stroke={B} strokeWidth="1.500" />
        {BARS.map((b, i) => (
          <g key={i}>
            <rect x={b.x} y={b.top} width="28" height={101 - b.top} fill="#000" stroke={B} />
            <rect x={b.x - 3} y={b.top - 3} width="5" height="5" fill={B} />
            <rect x={b.x + 25} y={b.top - 3} width="5" height="5" fill={B} />
            <rect x={b.x - 2} y="98" width="5" height="5" fill={B} />
            <rect x={b.x + 25} y="98" width="5" height="5" fill={B} />
            <rect x={b.x + 29} y="96" width="5" height="7" fill={B} />
            <text x={b.x + 13} y="110" textAnchor="middle" fontSize="11">{DATA[i][0]}</text>
            <path d={`M${b.x - 2} 110.500H${b.x + 28}`} stroke={B} />
            <rect x={b.x + 11} y="108" width="4" height="5" fill={B} />
          </g>
        ))}
      </g>
    </svg>
  );
}

const GRID_TOOLS = [
  { name: "데이터 가져오기", c: "#c0c0c0", d: "M4 1H16V15H10V14H15V4H5V7H4ZM6 5H8V6H6ZM9 5H11V6H9ZM12 5H14V6H12ZM6 7H8V8H6ZM9 7H11V8H9ZM12 7H14V8H12ZM9 9H11V10H9ZM12 9H14V10H12ZM12 11H14V12H12ZM1 10H5V8L9 11.500L5 15V13H1Z" },
  { name: "행/열 바꾸기", c: "#b4b4b4", d: "M1 1H5V15H1ZM2 2V14H4V2ZM2.500 4H3.500V5H2.500ZM2.500 7H3.500V8H2.500ZM2.500 10H3.500V11H2.500ZM6 1H15V5H6ZM7 2V4H14V2ZM8 2.500H9V3.500H8ZM10 2.500H11V3.500H10ZM12 2.500H13V3.500H12ZM6 6H8V7H6ZM6 8H8V9H6ZM6 10H8V11H6ZM13.500 6L17 9.500H14.500C14.500 12 13 13.500 11 13.500V16L8 12.500L11 9.500V12C12 12 13 11 13 9.500H10.500Z" },
  { name: "x/y 전환", c: "#747474", d: "M1 1H3L4 3L5 1H7L5 4L7 7H5L4 5L3 7H1L3 4ZM9 8H11L12 11L13 8H15L12 15H10L11 13ZM12 1V3H15V7H13V5H12V7L9 4ZM2 9H4V11H5V9L8 12L5 15V13H2Z" },
  { name: "셀 스타일", c: "#c0c0c0", d: "M3 0H4V3H12V0H13V3H16V4H13V9H16V10H13V12H12V10H4V12H3V10H0V9H3V4H0V3H3ZM4 4V9H12V4ZM1 13L4 11V12.500H12V11L15 13L12 15V13.800H4V15Z" },
  { name: "되돌리기", c: "#767676", d: "M1 5L6 0V4H10C17 4 17 14 10 14H6V12H10C14 12 14 6 10 6H6V10Z" },
  { name: "적용", c: "#7c7c7c", d: "M1 9L3 7L6 10L14 2L15.500 3.500L6 14Z" },
];

function GraphDataWindow() {
  return (
    <section aria-label="그래프 데이터" className="absolute top-[495px] left-[226px] flex h-60 w-[599px] flex-col border-t border-[#6a6a6a] bg-[#4a4a4a] shadow-[0_4px_16px_rgba(0,0,0,0.45)]">
      <div className="flex h-[30px] shrink-0 items-center justify-end bg-white pr-px">
        <button aria-label="창 닫기" className="flex h-[19px] w-[19px] items-center justify-center bg-[#c75050] pb-0.5 font-['Noto_Sans'] text-[11px] leading-none font-bold text-white">
          x
        </button>
      </div>
      <div className="flex h-[26px] shrink-0 bg-[#535353]">
        <input aria-label="셀 값" defaultValue="|" className="min-w-0 flex-1 border border-[#3a96f0] bg-white pl-1 text-sm leading-none text-black outline-none" />
        <div className="flex w-[156px] items-center justify-between px-[5px]">
          {GRID_TOOLS.map((g) => (
            <button key={g.name} aria-label={g.name}>
              <svg viewBox="0 0 17 16" className="h-4 w-[17px]" fill={g.c} fillRule="evenodd">
                <path d={g.d} />
              </svg>
            </button>
          ))}
        </div>
      </div>
      <div className="flex min-h-0 flex-1">
        <div className="min-w-0 flex-1 overflow-hidden bg-[#535353]">
          <table className="w-[630px] table-fixed border-collapse text-xs leading-none text-[#ececec]">
            <tbody>
              {Array.from({ length: 9 }, (_, r) => (
                <tr key={r} className="h-[19px]">
                  {Array.from({ length: 10 }, (_, c) => (
                    <td key={c} className={"w-[63px] border border-[#404040] p-0 pl-0.5 " + (r === 5 && c === 1 ? "shadow-[inset_0_0_0_1px_#2e2e2e]" : "")}>
                      {DATA[r]?.[c]}
                    </td>
                  ))}
                </tr>
              ))}
            </tbody>
          </table>
        </div>
        <div className="flex w-3.5 flex-col items-center justify-between bg-[#4a4a4a] pb-[3px] text-[#a0a0a0]">
          <div className="mt-5 h-[19px] w-3 rounded-full bg-[#606060]" />
          <Chevron className="h-2 w-2" />
        </div>
      </div>
      <div className="flex h-3.5 shrink-0 items-center pr-[17px] pl-0.5 text-[#a0a0a0]">
        <Chevron dir="left" className="h-2 w-2" />
        <div className="ml-[3px] h-3 w-[25px] rounded-full bg-[#606060]" />
        <Chevron dir="right" className="ml-auto h-2 w-2" />
      </div>
    </section>
  );
}

function Pin({ n, place, tip }: { n: number; place: string; tip: number }) {
  return (
    <svg viewBox="0 0 100 100" className={"absolute h-[100px] w-[100px] drop-shadow-[0_0_2px_rgba(0,0,0,0.6)] " + place}>
      <g transform={`rotate(${tip} 50 50)`}>
        <path d="M36 68L50 91L64 68Z" fill="#fff" />
        <circle cx="50" cy="50" r="23.500" fill="#fff" />
      </g>
      <circle cx="50" cy="50" r="21" fill="#ff7300" />
      <text x="50" y="64" textAnchor="middle" fontFamily="Roboto, sans-serif" fontWeight="900" fontSize="39" fill="#fff">
        {n}
      </text>
    </svg>
  );
}

function Callout({ text, place }: { text: string; place: string }) {
  return (
    <div className={"absolute flex h-[51px] items-center justify-center rounded-[13px] bg-white pb-1.5 font-['Lato'] font-black whitespace-nowrap text-black shadow-[0_0_4px_rgba(0,0,0,0.8)] [-webkit-text-stroke:2px_black] " + place}>
      {text}
    </div>
  );
}

function Canvas() {
  return (
    <div className="relative min-h-0 flex-1">
      <div className="absolute inset-0 flex overflow-hidden bg-[#606060]">
        <div className="relative min-w-0 flex-1 overflow-hidden">
          <div className="absolute top-[27px] left-80 h-[951px] w-[951px] border border-black bg-white">
            <BarGraph />
            <GraphDataWindow />
          </div>
          <Callout text="Transpose row / column" place="top-[434px] left-[821px] w-[419px] text-[37px]" />
          <Callout text="Apply" place="top-[542px] left-[1213px] w-[129px] text-[38px]" />
          <Pin n={1} tip={-90} place="top-[515px] left-[449px]" />
          <Pin n={2} tip={0} place="top-[466px] left-[980px]" />
          <Pin n={3} tip={90} place="top-[518px] left-[1132px]" />
          <div role="tooltip" className="absolute top-[585px] left-[1130px] border border-[#767676] bg-white px-[5px] pt-0.5 pb-1 text-[13px] leading-none text-[#555555] shadow-[2px_2px_2px_rgba(0,0,0,0.5)]">
            적용
          </div>
        </div>
        <div className="flex w-[18px] flex-col items-end bg-[#4a4a4a]">
          <div className="mt-[488px] h-[26px] w-3 rounded-full bg-[#676767]" />
          <Chevron className="mt-auto mr-[5px] mb-1 h-2 w-2 text-[#a8a8a8]" />
        </div>
      </div>
      <div className="absolute top-0 right-0 flex w-60 flex-col items-start gap-px">
        <ColorPanel />
        <SwatchesPanel />
        <StrokePanel />
      </div>
    </div>
  );
}

function StatusSelect({ label, value, width }: { label: string; value: string; width: string }) {
  return (
    <label className={"relative flex h-full bg-[#454545] text-[#e8e8e8] " + width}>
      <select aria-label={label} className="w-full appearance-none border-x border-[#5a5a5a] pl-[3px] text-[11px] leading-none outline-none">
        <option>{value}</option>
      </select>
      <Chevron className="absolute top-1 right-1 h-2.5 w-2.5" />
    </label>
  );
}

function StatusIcon({ label, d }: { label: string; d: string }) {
  return (
    <button aria-label={label}>
      <svg viewBox="0 0 9 9" className="h-[9px] w-[9px]" fill="#777777">
        <path d={d} />
      </svg>
    </button>
  );
}

function StatusBar() {
  return (
    <div className="flex h-4 shrink-0 items-center border-t border-[#4a4a4a] bg-[#535353] pl-[3px] text-[11px] leading-none">
      <StatusSelect label="확대/축소" value="84.44%" width="w-[69px]" />
      <div className="flex w-[41px] justify-center gap-2">
        <StatusIcon label="처음" d="M0 0H2V9H0ZM8 0V9L3 4.500Z" />
        <StatusIcon label="이전" d="M7 0V9L2 4.500Z" />
      </div>
      <StatusSelect label="대지" value="1" width="w-[59px]" />
      <div className="flex w-[43px] justify-center gap-2">
        <StatusIcon label="다음" d="M2 0V9L7 4.500Z" />
        <StatusIcon label="마지막" d="M0 0V9L5 4.500ZM6 0H8V9H6Z" />
      </div>
      <div className="flex h-full w-[200px] items-center justify-center border-x border-[#484848] bg-[#555555] text-[#d0d0d0]">막대 그래프</div>
      <button aria-label="상태 메뉴" className="flex w-[18px] justify-center">
        <svg viewBox="0 0 6 9" className="h-[9px] w-1.5" fill="#d0d0d0">
          <path d="M0 0L6 4.500L0 9Z" />
        </svg>
      </button>
      <div className="flex h-full flex-1 items-center bg-[#4a4a4a] pl-[3px] text-[#a0a0a0]">
        <Chevron dir="left" className="h-2 w-2" />
        <div className="mx-auto h-3 w-6 rounded-full bg-[#676767]" />
        <Chevron dir="right" className="mr-1 h-2 w-2" />
      </div>
      <div className="h-full w-[18px] border-l border-[#505050] bg-[#535353]" />
    </div>
  );
}

const LAYER_ACTIONS = [
  { name: "내보내기용 항목 수집", on: true, d: "M1 4H7V5H2V13H11V8H12V14H1ZM8 1H13V6H12V3L7 8L6 7L11 2H8Z" },
  { name: "오브젝트 찾기", on: true, d: "M6 1A4.500 4.500 0 1 1 5.900 1ZM6 2.500A3 3 0 1 0 6.100 2.500ZM9 8L13.500 12.500L12 14L7.500 9.500Z" },
  { name: "클리핑 마스크", d: "M1 2H10V5H13V13H5V10H1ZM2 3V9H5V5H9V3ZM10 6V10H6V12H12V6Z" },
  { name: "새 하위 레이어", on: true, d: "M-2 1H-1V5H1V3L4 5.500L1 8V6H-2ZM4 4H13V13H4ZM5 5V12H12V5ZM8 6H9V8H11V9H9V11H8V9H6V8H8Z" },
  { name: "새 레이어", on: true, d: "M2 2H13V13H2ZM3 3V12H12V3ZM7 5H8V7H10V8H8V10H7V8H5V7H7Z" },
  { name: "선택 영역 삭제", d: "M2 3H5V1H9V3H12V4H2ZM3 5H11V13H3ZM4 6V12H5V6ZM6.500 6V12H7.500V6ZM9 6V12H10V6Z" },
];

function LayersDock() {
  return (
    <aside className="flex w-[270px] shrink-0 flex-col border-x border-[#383838] bg-[#535353]">
      <div className="flex h-3 shrink-0 items-center justify-end border-b border-[#353535] bg-[#424242] pr-[5px]">
        <DoubleArrow />
      </div>
      <div role="tablist" className="flex h-[27px] shrink-0 border-b border-[#383838] bg-[#424242] text-[13px] leading-none text-[#9a9a9a]">
        <button role="tab" className="border-r border-[#383838] px-[9px] pb-[3px]">속성</button>
        <button role="tab" aria-selected="true" className="-mb-px border-r border-[#383838] bg-[#535353] px-2 pb-[3px] text-[#f0f0f0]">레이어</button>
        <button role="tab" className="border-r border-[#383838] px-[9px] pb-[3px]">라이브러리</button>
        <button aria-label="패널 메뉴" className="ml-auto pr-1.5">
          <MenuLines />
        </button>
      </div>
      <div className="mt-[5px] mr-[5px] ml-[5px] flex-1 rounded-sm border border-[#5e5e5e]">
        <div className="relative flex h-[21px] items-center bg-[#50667d] text-[11px] leading-none text-[#ececec]">
          <button aria-label="가시성" className="flex h-full w-[21px] items-center justify-center border-r border-[#485a6e]">
            <svg viewBox="0 0 12 8" className="h-2 w-3" fill="none" stroke="#c8c8c8" strokeWidth="1.200">
              <path d="M.5 4C3 .2 9 .2 11.500 4C9 7.800 3 7.800 .5 4Z" />
              <circle cx="6" cy="4" r="1.700" fill="#c8c8c8" />
            </svg>
          </button>
          <div className="h-full w-[22px] border-r border-[#485a6e]" />
          <div className="h-[18px] w-[3px] bg-[#4f80ff]" />
          <Chevron dir="right" className="ml-1.5 h-2.5 w-2.5 text-white" />
          <svg viewBox="0 0 18 18" className="ml-2.5 h-[18px] w-[18px]">
            <rect x=".5" y=".5" width="17" height="17" fill="#fff" stroke="#000" />
            <path d="M1 4L3 6V5H6V6H8V5H10V6H12V5H14V7H17V13H1Z" fill="#000" />
          </svg>
          <span className="ml-[5px]">레이어 1</span>
          <span className="ml-auto h-2 w-2 rounded-full border border-[#c8c8c8]" />
          <span className="mr-[7px] ml-1.5 h-2 w-2 border border-black bg-[#4f80ff]" />
          <svg viewBox="0 0 6 6" className="absolute top-0 right-0 h-1.5 w-1.5" fill="#dddddd">
            <path d="M0 0H6V6Z" />
          </svg>
        </div>
      </div>
      <div className="flex h-[19px] shrink-0 items-center pr-[26px] pl-[5px] text-[11px] leading-none text-[#d8d8d8]">
        1 레이어
        <div className="ml-auto flex gap-3">
          {LAYER_ACTIONS.map((a) => (
            <button key={a.name} aria-label={a.name}>
              <svg viewBox="0 0 14 14" className="h-3.5 w-3.5 overflow-visible" fill={a.on ? "#c8c8c8" : "#6e6e6e"} fillRule="evenodd">
                <path d={a.d} />
              </svg>
            </button>
          ))}
        </div>
      </div>
    </aside>
  );
}

export default function App() {
  return (
    <div className="flex h-screen w-full flex-col overflow-hidden bg-[#535353] font-['Noto_Sans_CJK_KR',sans-serif]">
      <TopBar />
      <div className="flex min-h-0 flex-1">
        <Toolbar />
        <main className="flex min-w-0 flex-1 flex-col">
          <div className="flex h-[29px] shrink-0 border-b border-[#3a3a3a] bg-[#424242]">
            <div className="flex items-center gap-3 border-r border-[#383838] bg-[#535353] pr-1.5 pb-0.5 pl-2.5 text-[13px] leading-none whitespace-nowrap text-[#e8e8e8]">
              막대그래프예시.ai* @ 84.44% (RGB/GPU 미리 보기)
              <button aria-label="문서 닫기">
                <Cross />
              </button>
            </div>
          </div>
          <Canvas />
          <StatusBar />
        </main>
        <LayersDock />
      </div>
      <div className="flex h-0.5 shrink-0 bg-[#262626]">
        <div className="ml-[246px] w-12 bg-[#555555]" />
      </div>
    </div>
  );
}
